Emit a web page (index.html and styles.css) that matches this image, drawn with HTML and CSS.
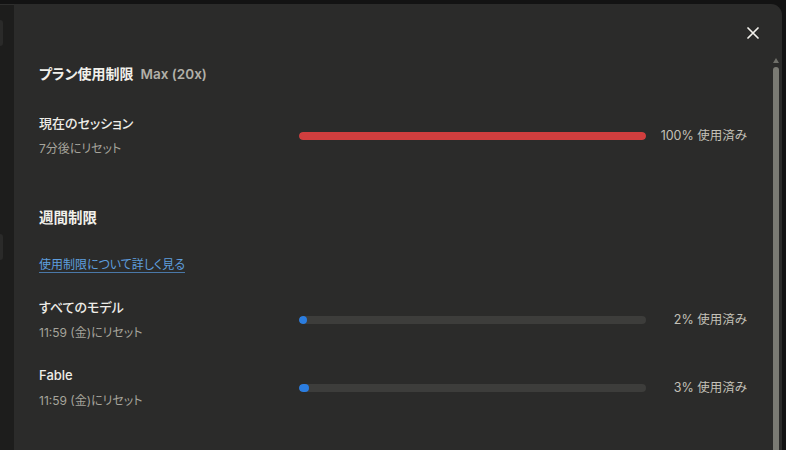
FILE: index.html
```html
<!DOCTYPE html>
<html lang="ja">
<head>
<meta charset="utf-8">
<link rel="stylesheet" href="styles.css">
</head>
<body>
<div class="page">
  <aside class="sidebar">
    <div class="side-item side-item-a"></div>
    <div class="side-item side-item-b"></div>
  </aside>
  <section class="modal">
    <div class="modal-head">
      <button class="close" aria-label="閉じる">
        <svg width="12" height="12" viewBox="0 0 12 12"><path d="M1 1 L11 11 M11 1 L1 11" stroke="#f2f1ec" stroke-width="1.7" stroke-linecap="round" fill="none"/></svg>
      </button>
    </div>
    <div class="modal-body">
      <div class="content">
        <h2 class="title">プラン使用制限<span class="plan">Max (20x)</span></h2>

        <div class="row row-session">
          <div class="label">
            <div class="name">現在のセッション</div>
            <div class="sub">7分後にリセット</div>
          </div>
          <div class="track"><div class="fill fill-red" style="width:100%"></div></div>
          <div class="value">100% 使用済み</div>
        </div>

        <h3 class="section">週間制限</h3>
        <a class="link" href="#">使用制限について詳しく見る</a>

        <div class="row row-first">
          <div class="label">
            <div class="name">すべてのモデル</div>
            <div class="sub">11:59 (金)にリセット</div>
          </div>
          <div class="track"><div class="fill fill-blue" style="width:2%"></div></div>
          <div class="value">2% 使用済み</div>
        </div>

        <div class="row row-next">
          <div class="label">
            <div class="name">Fable</div>
            <div class="sub">11:59 (金)にリセット</div>
          </div>
          <div class="track"><div class="fill fill-blue" style="width:3%"></div></div>
          <div class="value">3% 使用済み</div>
        </div>
      </div>
      <div class="scrollbar">
        <div class="arrow"></div>
        <div class="thumb"></div>
      </div>
    </div>
  </section>
</div>
</body>
</html>
```
FILE: styles.css
```css
* { box-sizing: border-box; }
html, body {
  margin: 0;
  height: 100%;
  background: #131313;
  overflow: hidden;
}
body {
  font-family: Inter, "Noto Sans CJK JP", sans-serif;
  font-feature-settings: "palt";
}
.page {
  display: flex;
  height: 450px;
  padding: 4px 4px 0 0;
}
.sidebar {
  width: 14px;
  flex: none;
  background: #1d1d1c;
  border-top: 1px solid #2e2e2d;
  padding-top: 15px;
  display: flex;
  flex-direction: column;
  gap: 188px;
}
.side-item {
  width: 3px;
  height: 26px;
  background: #2a2a29;
  border-radius: 0 4px 4px 0;
}
.modal {
  flex: 1;
  background: #2b2b2a;
  border-top-right-radius: 11px;
  display: flex;
  flex-direction: column;
}
.modal-head {
  display: flex;
  justify-content: flex-end;
  padding: 19px 19px 0 0;
}
.close {
  width: 20px;
  height: 20px;
  padding: 0;
  border: 0;
  background: transparent;
  display: flex;
  align-items: center;
  justify-content: center;
}
.modal-body {
  flex: 1;
  display: flex;
}
.content {
  flex: 1;
  padding: 0 25px 0 25px;
}
.title {
  margin: 21px 0 0;
  font-size: 14px;
  line-height: 20px;
  font-weight: 700;
  color: #f1f0eb;
}
.plan {
  margin-left: 7px;
  font-size: 13.5px;
  font-weight: 600;
  color: #b2b0a8;
}
.row {
  display: grid;
  grid-template-columns: 260px 347px 1fr;
  align-items: center;
}
.row-session { margin-top: 29px; }
.row-first { margin-top: 22px; }
.row-next { margin-top: 22px; }
.name {
  font-size: 13px;
  line-height: 20px;
  font-weight: 500;
  color: #eeede8;
}
.sub {
  margin-top: 6px;
  font-size: 12px;
  line-height: 20px;
  color: #a6a49c;
}
.track {
  height: 8px;
  border-radius: 4px;
  background: #3d3d3b;
  overflow: hidden;
}
.fill {
  height: 100%;
  border-radius: 4px;
}
.fill-red { background: #d13e3e; }
.fill-blue { background: #2b7de0; min-width: 8px; }
.value {
  text-align: right;
  font-size: 12.5px;
  line-height: 20px;
  color: #c3c1b8;
}
.section {
  margin: 49px 0 0;
  font-size: 14.5px;
  line-height: 20px;
  font-weight: 700;
  color: #f1f0eb;
}
.link {
  display: inline-block;
  margin-top: 27px;
  font-size: 12px;
  line-height: 20px;
  color: #5e9ede;
  text-decoration: underline;
  text-decoration-color: #4a78a8;
  text-underline-offset: 3px;
}
.scrollbar {
  width: 10px;
  flex: none;
  padding: 15px 3px 0 1px;
  display: flex;
  flex-direction: column;
  align-items: center;
  gap: 4px;
}
.arrow {
  width: 0;
  height: 0;
  border-left: 3px solid transparent;
  border-right: 3px solid transparent;
  border-bottom: 5px solid #6f6f69;
}
.thumb {
  width: 6px;
  flex: 1;
  background: #7a7a73;
  border-radius: 3px 3px 0 0;
}
```
